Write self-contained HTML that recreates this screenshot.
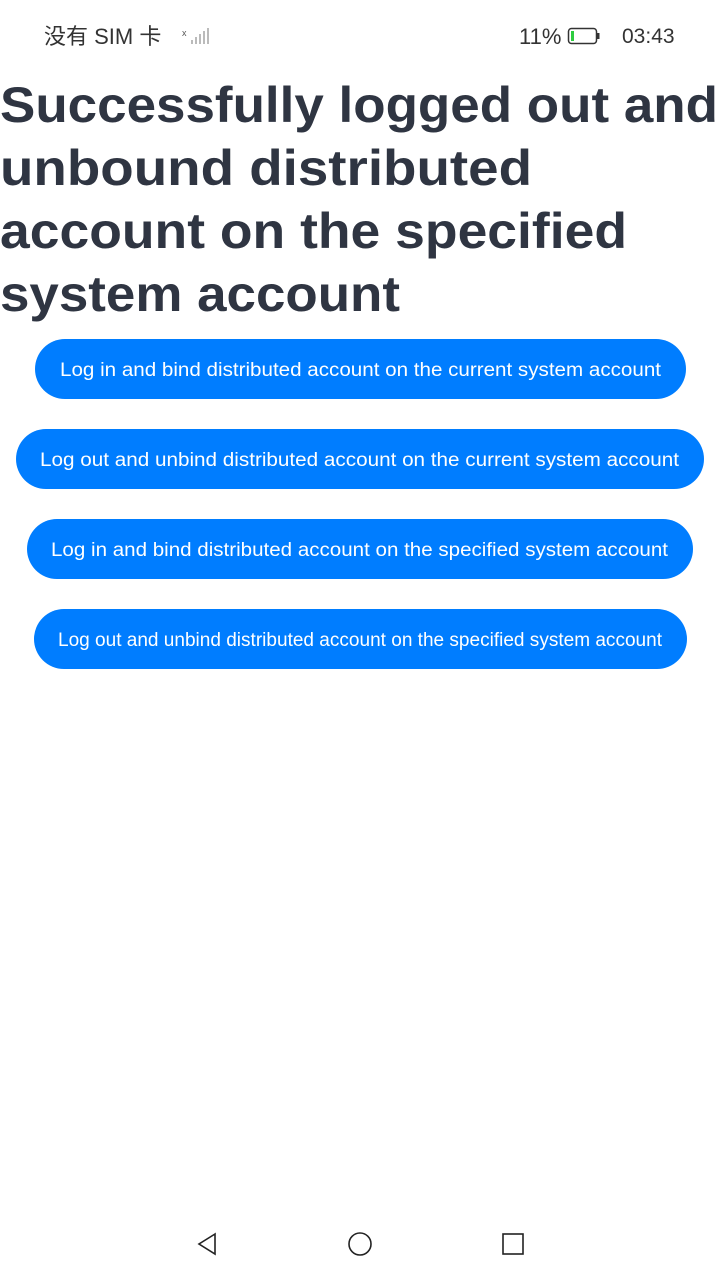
<!DOCTYPE html>
<html><head><meta charset="utf-8"><style>
html,body{margin:0;padding:0;background:#fff;width:720px;height:1280px;overflow:hidden}
svg{display:block}
</style></head><body>
<svg width="720" height="1280" xmlns="http://www.w3.org/2000/svg" font-family="Liberation Sans, Noto Sans CJK SC, sans-serif">
<text x="44" y="44" font-size="22" fill="#333" font-family="Liberation Sans, Noto Sans CJK SC, sans-serif">没有 SIM 卡</text>
<text x="182" y="36" font-size="9" fill="#555">x</text>
<g fill="#bbb"><rect x="191" y="40" width="2" height="4"/><rect x="195" y="37" width="2" height="7"/><rect x="199" y="34" width="2" height="10"/><rect x="203" y="31" width="2" height="13"/><rect x="207" y="28" width="2" height="16"/></g>
<text x="519" y="44" font-size="22" fill="#333">11%</text>
<rect x="568.5" y="28.5" width="28" height="15" rx="3" fill="none" stroke="#333" stroke-width="1.5"/>
<rect x="571" y="31" width="3" height="10" fill="#2ecc40"/>
<rect x="597" y="33" width="2.5" height="6" fill="#333"/>
<text x="622" y="43" font-size="21" fill="#333">03:43</text>
<g font-size="50" font-weight="bold" fill="#2f3542">
<text x="0" y="122" textLength="718" lengthAdjust="spacingAndGlyphs">Successfully logged out and</text>
<text x="0" y="185" textLength="532" lengthAdjust="spacingAndGlyphs">unbound distributed</text>
<text x="0" y="248" textLength="627" lengthAdjust="spacingAndGlyphs">account on the specified</text>
<text x="0" y="311" textLength="400" lengthAdjust="spacingAndGlyphs">system account</text>
</g>
<g fill="#007dff">
<rect x="35" y="339" width="651" height="60" rx="30"/>
<rect x="16" y="429" width="688" height="60" rx="30"/>
<rect x="27" y="519" width="666" height="60" rx="30"/>
<rect x="34" y="609" width="653" height="60" rx="30"/>
</g>
<g fill="#fff" font-size="19">
<text x="60" y="376" textLength="601" lengthAdjust="spacingAndGlyphs">Log in and bind distributed account on the current system account</text>
<text x="40" y="466" textLength="639" lengthAdjust="spacingAndGlyphs">Log out and unbind distributed account on the current system account</text>
<text x="51" y="556" textLength="617" lengthAdjust="spacingAndGlyphs">Log in and bind distributed account on the specified system account</text>
<text x="58" y="646" textLength="604" lengthAdjust="spacingAndGlyphs">Log out and unbind distributed account on the specified system account</text>
</g>
<g fill="none" stroke="#222" stroke-width="1.6">
<path d="M215 1234 L199 1244 L215 1254 Z"/>
<circle cx="360" cy="1244" r="11"/>
<rect x="503" y="1234" width="20" height="20"/>
</g>
</svg>
</body></html>
